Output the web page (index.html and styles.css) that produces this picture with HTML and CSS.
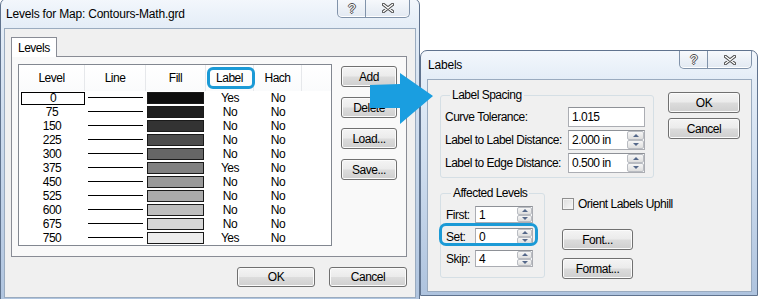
FILE: index.html
```html
<!DOCTYPE html>
<html lang="en">

<head>
    <meta charset="UTF-8">
    <meta name="viewport" content="width=device-width, initial-scale=1.0">
    <title>Levels for Map</title>
    <link rel="stylesheet" href="styles.css">
</head>

<body>
    <div class="desk">
        <!-- Levels dialog -->
        <div class="win levels">
            <div class="titlebar">
                <span class="title">Levels for Map: Contours-Math.grd</span>
                <div class="caps">
                    <span class="cap cap-help">?</span>
                    <span class="cap cap-close">
                        <svg width="12" height="10" viewBox="0 0 12 10">
                            <path d="M1.5 1.5 L10.5 8.5 M10.5 1.5 L1.5 8.5" stroke="#4a4a4a" stroke-width="3.4" stroke-linecap="round" />
                            <path d="M1.5 1.5 L10.5 8.5 M10.5 1.5 L1.5 8.5" stroke="#fff" stroke-width="1.4" stroke-linecap="round" />
                        </svg>
                    </span>
                </div>
            </div>
            <div class="client">
                <div class="tabstrip"><span class="tab">Levels</span></div>
                <div class="page">
                    <div class="list">
                        <div class="lrow lhead">
                            <span>Level</span>
                            <span>Line</span>
                            <span>Fill</span>
                            <span class="marked">Label</span>
                            <span>Hach</span>
                            <span></span>
                        </div>
                        <div class="lrow"><span class="lv"><b class="focus">0</b></span><span><i class="stroke"></i></span><span><i class="swatch" style="background:#0e0e0e"></i></span><span>Yes</span><span>No</span></div>
                        <div class="lrow"><span class="lv">75</span><span><i class="stroke"></i></span><span><i class="swatch" style="background:#1f1f1f"></i></span><span>No</span><span>No</span></div>
                        <div class="lrow"><span class="lv">150</span><span><i class="stroke"></i></span><span><i class="swatch" style="background:#333333"></i></span><span>No</span><span>No</span></div>
                        <div class="lrow"><span class="lv">225</span><span><i class="stroke"></i></span><span><i class="swatch" style="background:#4c4c4c"></i></span><span>No</span><span>No</span></div>
                        <div class="lrow"><span class="lv">300</span><span><i class="stroke"></i></span><span><i class="swatch" style="background:#666666"></i></span><span>No</span><span>No</span></div>
                        <div class="lrow"><span class="lv">375</span><span><i class="stroke"></i></span><span><i class="swatch" style="background:#808080"></i></span><span>Yes</span><span>No</span></div>
                        <div class="lrow"><span class="lv">450</span><span><i class="stroke"></i></span><span><i class="swatch" style="background:#999999"></i></span><span>No</span><span>No</span></div>
                        <div class="lrow"><span class="lv">525</span><span><i class="stroke"></i></span><span><i class="swatch" style="background:#aaaaaa"></i></span><span>No</span><span>No</span></div>
                        <div class="lrow"><span class="lv">600</span><span><i class="stroke"></i></span><span><i class="swatch" style="background:#bdbdbd"></i></span><span>No</span><span>No</span></div>
                        <div class="lrow"><span class="lv">675</span><span><i class="stroke"></i></span><span><i class="swatch" style="background:#d6d6d6"></i></span><span>No</span><span>No</span></div>
                        <div class="lrow"><span class="lv">750</span><span><i class="stroke"></i></span><span><i class="swatch" style="background:#ececec"></i></span><span>Yes</span><span>No</span></div>
                    </div>
                    <div class="side">
                        <button class="btn">Add</button>
                        <button class="btn">Delete</button>
                        <button class="btn">Load...</button>
                        <button class="btn">Save...</button>
                    </div>
                </div>
                <div class="foot">
                    <button class="btn btn-wide">OK</button>
                    <button class="btn btn-wide">Cancel</button>
                </div>
            </div>
        </div>

        <!-- Labels dialog -->
        <div class="win labels">
            <div class="titlebar">
                <span class="title">Labels</span>
                <div class="caps">
                    <span class="cap cap-help">?</span>
                    <span class="cap cap-close">
                        <svg width="12" height="10" viewBox="0 0 12 10">
                            <path d="M1.5 1.5 L10.5 8.5 M10.5 1.5 L1.5 8.5" stroke="#4a4a4a" stroke-width="3.4" stroke-linecap="round" />
                            <path d="M1.5 1.5 L10.5 8.5 M10.5 1.5 L1.5 8.5" stroke="#fff" stroke-width="1.4" stroke-linecap="round" />
                        </svg>
                    </span>
                </div>
            </div>
            <div class="client">
                <div class="top-row">
                    <fieldset class="group spacing">
                        <legend>Label Spacing</legend>
                        <div class="field">
                            <label>Curve Tolerance:</label>
                            <span class="edit">1.015</span>
                        </div>
                        <div class="field">
                            <label>Label to Label Distance:</label>
                            <span class="edit">2.000 in<span class="updown"><i class="up"></i><i class="dn"></i></span></span>
                        </div>
                        <div class="field">
                            <label>Label to Edge Distance:</label>
                            <span class="edit">0.500 in<span class="updown"><i class="up"></i><i class="dn"></i></span></span>
                        </div>
                    </fieldset>
                    <div class="btncol">
                        <button class="btn btn-dlg">OK</button>
                        <button class="btn btn-dlg">Cancel</button>
                    </div>
                </div>
                <div class="bottom-row">
                    <fieldset class="group affected">
                        <legend>Affected Levels</legend>
                        <div class="field">
                            <label>First:</label>
                            <span class="edit">1<span class="updown"><i class="up"></i><i class="dn"></i></span></span>
                        </div>
                        <div class="field marked">
                            <label>Set:</label>
                            <span class="edit">0<span class="updown"><i class="up"></i><i class="dn"></i></span></span>
                        </div>
                        <div class="field">
                            <label>Skip:</label>
                            <span class="edit">4<span class="updown"><i class="up"></i><i class="dn"></i></span></span>
                        </div>
                    </fieldset>
                    <div class="opts">
                        <label class="check"><span class="box"></span>Orient Labels Uphill</label>
                        <button class="btn btn-opt">Font...</button>
                        <button class="btn btn-opt">Format...</button>
                    </div>
                </div>
            </div>
        </div>

        <!-- callout arrow -->
        <svg class="arrow" width="70" height="58" viewBox="0 0 70 58">
            <polygon points="4,15 34,14 34,3 67,26 34,54 34,38 4,38" fill="#1a9ee0" />
        </svg>
    </div>
</body>

</html>
```

FILE: styles.css
```css
* {
    margin: 0;
    padding: 0;
    box-sizing: border-box;
}

body {
    background: #fff;
    font-family: "Liberation Sans", Arial, sans-serif;
    font-size: 12px;
    letter-spacing: -0.5px;
    color: #000;
}

.desk {
    position: relative;
    width: 761px;
    height: 299px;
    overflow: hidden;
}

/* window frames */
.win {
    position: absolute;
    display: flex;
    flex-direction: column;
    border: 1px solid #60738e;
    border-radius: 7px 7px 0 0;
    background: linear-gradient(180deg, #f3f7fc 0, #e4edf7 28px, #d0deef 110px, #aec3de 100%);
}

.win.levels {
    left: 0;
    top: -2px;
    width: 420px;
    height: 312px;
    padding: 0 3px;
}

.win.labels {
    left: 420px;
    top: 50px;
    width: 338px;
    height: 246px;
    padding: 0 5px 3px 6px;
}

.titlebar {
    display: flex;
    justify-content: space-between;
    align-items: flex-start;
    height: 29px;
    flex: none;
}

.labels .titlebar {
    height: 28px;
}

.title {
    align-self: center;
    padding-left: 2px;
    letter-spacing: -0.2px;
    color: #000;
}

.labels .title {
    padding-left: 1px;
}

.caps {
    display: flex;
    margin-right: 6px;
    height: 19px;
    border: 1px solid #8193aa;
    border-top: none;
    border-radius: 0 0 5px 5px;
    background: linear-gradient(180deg, #f7f9fc, #e2e9f2);
    box-shadow: inset 0 -1px 0 #fff;
}

.labels .caps {
    margin-right: 0;
    height: 18px;
}

.cap {
    display: flex;
    justify-content: center;
    align-items: center;
}

.cap-help {
    width: 28px;
    border-right: 1px solid #8193aa;
    font: 13px "Liberation Sans", Arial, sans-serif;
    color: #fff;
    text-shadow: 1px 0 0 #4a4a4a, -1px 0 0 #4a4a4a, 0 1px 0 #4a4a4a, 0 -1px 0 #4a4a4a;
}

.cap-close {
    width: 43px;
}

.client {
    flex: none;
    background: #f0f0f0;
    border: 1px solid #9aabbf;
}

/* ---- Levels dialog ---- */
.levels .client {
    height: 270px;
    padding: 8px 8px 0 6px;
}

.tabstrip {
    display: flex;
    height: 19px;
}

.tab {
    position: relative;
    z-index: 1;
    width: 46px;
    height: 20px;
    padding: 3px 0 0 6px;
    background: #fff;
    border: 1px solid #898c95;
    border-bottom: none;
}

.page {
    display: flex;
    align-items: flex-start;
    width: 396px;
    height: 201px;
    padding: 7px 0 0 6px;
    background: #f9f9f9;
    border: 1px solid #898c95;
}

.list {
    width: 314px;
    height: 182px;
    background: #fff;
    border: 1px solid #828790;
}

.lrow {
    display: grid;
    grid-template-columns: 66px 61px 60px 48px 48px 1fr;
    height: 14px;
    line-height: 14px;
    text-align: center;
}

.lhead {
    height: 26px;
    line-height: 26px;
    background: linear-gradient(180deg, #fff, #fafbfc);
}

.lhead span {
    position: relative;
    border-right: 1px solid #e6e8eb;
}

.lhead span:last-child {
    border-right: none;
}

.lhead .marked::after {
    content: '';
    position: absolute;
    top: 2px;
    bottom: 2px;
    left: 1px;
    right: -2px;
    border: 3px solid #1b9ad6;
    border-radius: 6px;
}

.lrow .lv {
    position: relative;
}

.focus {
    display: block;
    width: 64px;
    height: 13px;
    margin: 1px 0 0 2px;
    line-height: 11px;
    font-weight: normal;
    border: 1px solid #000;
}

.stroke {
    display: block;
    width: 55px;
    height: 1px;
    margin: 6px 0 0 3px;
    background: #000;
}

.swatch {
    display: block;
    width: 57px;
    height: 12px;
    margin: 1px 0 0 1px;
    border: 1px solid #1a1a1a;
}

.side {
    display: flex;
    flex-direction: column;
    gap: 10px;
    margin: 2px 0 0 9px;
}

/* buttons */
.btn {
    width: 56px;
    height: 21px;
    font: inherit;
    letter-spacing: inherit;
    color: #000;
    border: 1px solid #707070;
    border-radius: 3px;
    background: linear-gradient(180deg, #f4f4f4 0%, #ebebeb 48%, #dcdcdc 52%, #cfcfcf 100%);
    box-shadow: inset 0 0 0 1px #fbfbfb;
}

.btn-wide {
    width: 78px;
    height: 20px;
}

.foot {
    display: flex;
    justify-content: flex-end;
    gap: 14px;
    margin-top: 10px;
}

/* ---- Labels dialog ---- */
.labels .client {
    height: 213px;
    padding: 8px 0 0 12px;
}

.top-row,
.bottom-row {
    display: flex;
    align-items: flex-start;
}

.bottom-row {
    margin-top: 8px;
}

.group {
    border: 1px solid #d5dfe5;
    border-radius: 3px;
}

.group legend {
    margin-left: 5px;
    padding: 0 2px;
    line-height: 14px;
}

.spacing {
    width: 214px;
    padding: 5px 8px 4px 4px;
    display: flex;
    flex-direction: column;
    gap: 3px;
}

.spacing .field {
    display: grid;
    grid-template-columns: 123px 77px;
    align-items: center;
    height: 20px;
}

.affected {
    width: 105px;
    padding: 6px 11px 10px 5px;
    display: flex;
    flex-direction: column;
    gap: 5px;
}

.affected .field {
    position: relative;
    display: grid;
    grid-template-columns: 29px 58px;
    align-items: center;
    height: 17px;
}

.affected .marked::after {
    content: '';
    position: absolute;
    top: -5px;
    bottom: -1px;
    left: -7px;
    right: -5px;
    border: 3px solid #1b9ad6;
    border-radius: 7px;
}

.edit {
    display: flex;
    justify-content: space-between;
    align-items: center;
    height: 100%;
    padding-left: 3px;
    background: #fff;
    border: 1px solid #abadb3;
    border-top-color: #8e9197;
}

.updown {
    display: flex;
    flex-direction: column;
    width: 15px;
    height: 100%;
}

.spacing .updown {
    width: 17px;
}

.updown i {
    flex: 1;
    display: flex;
    justify-content: center;
    align-items: center;
    border: 1px solid #b9bcc2;
    border-radius: 2px;
    background: linear-gradient(180deg, #f6f6f6, #dedede);
}

.updown i::before {
    content: '';
    border-left: 3px solid transparent;
    border-right: 3px solid transparent;
}

.updown .up::before {
    border-bottom: 3px solid #55688a;
}

.updown .dn::before {
    border-top: 3px solid #55688a;
}

.btncol {
    display: flex;
    flex-direction: column;
    gap: 5px;
    margin: 4px 0 0 14px;
}

.btn-dlg {
    width: 72px;
}

.opts {
    display: flex;
    flex-direction: column;
    align-items: flex-start;
    margin-left: 17px;
    padding-top: 12px;
}

.check {
    display: flex;
    align-items: center;
    gap: 4px;
    height: 12px;
}

.box {
    width: 12px;
    height: 12px;
    border: 1px solid #8f8f8f;
    background: linear-gradient(135deg, #dcdcdc, #f8f8f8);
    box-shadow: inset 0 0 0 1px #f4f4f4;
}

.btn-opt {
    width: 71px;
    margin-bottom: 8px;
}

.check + .btn-opt {
    margin-top: 19px;
}

/* callout arrow over both dialogs */
.arrow {
    position: absolute;
    left: 366px;
    top: 70px;
}
```
